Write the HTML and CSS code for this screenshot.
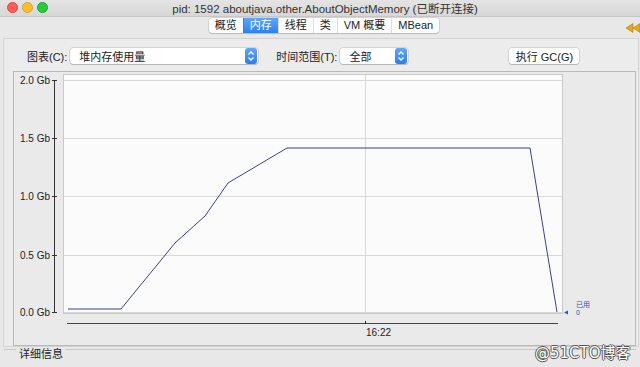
FILE: index.html
```html
<!DOCTYPE html>
<html lang="zh">
<head>
<meta charset="utf-8">
<title>JConsole 内存</title>
<link rel="stylesheet" href="styles.css">
</head>
<body>
<div class="titlebar">
  <div class="lights"><span class="light red"></span><span class="light yellow"></span><span class="light green"></span></div>
  <div class="title">pid: 1592 aboutjava.other.AboutObjectMemory (已断开连接)</div>
  <div></div>
</div>
<div class="tabbar">
  <div></div>
  <div class="tabs">
    <span class="tab">概览</span><span class="tab active">内存</span><span class="tab">线程</span><span class="tab">类</span><span class="tab">VM 概要</span><span class="tab">MBean</span>
  </div>
  <svg class="rewind" width="18" height="10" viewBox="0 0 18 10"><path d="M1 5 L8 0.5 V9.5 Z M8 5 L15 0.5 V9.5 Z" fill="#e2a81e" stroke="#b07d10" stroke-width="0.6"/><rect x="15.5" y="1" width="2" height="8" fill="#e2a81e"/></svg>
</div>
<div class="panel">
  <div class="controls">
    <span class="label">图表(C):</span>
    <div class="combo combo-wide"><span class="combo-text">堆内存使用量</span><span class="stepper"><svg width="8" height="12" viewBox="0 0 8 12"><path d="M1.5 4.5 L4 2 L6.5 4.5 M1.5 7.5 L4 10 L6.5 7.5" fill="none" stroke="#fff" stroke-width="1.3"/></svg></span></div>
    <span class="label label-range">时间范围(T):</span>
    <div class="combo combo-narrow"><span class="combo-text">全部</span><span class="stepper"><svg width="8" height="12" viewBox="0 0 8 12"><path d="M1.5 4.5 L4 2 L6.5 4.5 M1.5 7.5 L4 10 L6.5 7.5" fill="none" stroke="#fff" stroke-width="1.3"/></svg></span></div>
    <button class="gc">执行 GC(G)</button>
  </div>
  <div class="chart">
    <svg class="plot" width="621" height="273" viewBox="0 0 621 273">
      <rect x="49.5" y="2.5" width="499" height="239" fill="#fbfbfb" stroke="#c9c9c9"/>
      <g stroke="#d9d9d9" stroke-width="1">
        <line x1="50" y1="8.5" x2="548" y2="8.5"/>
        <line x1="50" y1="66.5" x2="548" y2="66.5"/>
        <line x1="50" y1="124.5" x2="548" y2="124.5"/>
        <line x1="50" y1="183.5" x2="548" y2="183.5"/>
        <line x1="50" y1="240.5" x2="548" y2="240.5"/>
        <line x1="351.5" y1="3" x2="351.5" y2="241"/>
      </g>
      <g stroke="#333" stroke-width="1">
        <line x1="40.5" y1="8" x2="40.5" y2="241"/>
        <line x1="38" y1="8.5" x2="43" y2="8.5"/>
        <line x1="38" y1="66.5" x2="43" y2="66.5"/>
        <line x1="38" y1="124.5" x2="43" y2="124.5"/>
        <line x1="38" y1="183.5" x2="43" y2="183.5"/>
        <line x1="38" y1="240.5" x2="43" y2="240.5"/>
      </g>
      <g class="axis-label" text-anchor="end">
        <text x="36" y="12">2.0 Gb</text>
        <text x="36" y="70">1.5 Gb</text>
        <text x="36" y="128">1.0 Gb</text>
        <text x="36" y="187">0.5 Gb</text>
        <text x="36" y="244">0.0 Gb</text>
      </g>
      <line x1="53" y1="251.5" x2="544" y2="251.5" stroke="#444"/>
      <line x1="351.5" y1="249" x2="351.5" y2="252" stroke="#222"/>
      <text class="axis-label" x="352" y="264">16:22</text>
      <polyline points="54,237 107,237 161,171 191,144 214,111 273,76 516,76 543,240" fill="none" stroke="#3d3d94" stroke-width="1"/>
      <polygon points="550,240.5 554,238.5 554,242.5" fill="#3355aa"/>
      <text class="legend" x="562" y="235">已用</text>
      <text class="legend" x="562" y="243">0</text>
    </svg>
  </div>
</div>
<div class="details"><span class="details-title">详细信息</span></div>
<div class="watermark">@51CTO博客</div>
</body>
</html>
```
FILE: styles.css
```css
* { box-sizing: border-box; margin: 0; padding: 0; }
html, body { width: 640px; height: 367px; overflow: hidden; }
body {
  position: relative;
  background: #e8e8e8;
  font-family: "Liberation Sans", "Noto Sans CJK SC", sans-serif;
  font-size: 11px;
  color: #222;
}
.titlebar {
  height: 17px;
  display: grid;
  grid-template-columns: 1fr auto 1fr;
  align-items: center;
  background: linear-gradient(#e4e4e4, #d7d7d7);
  border-bottom: 1px solid #c6c6c6;
}
.lights { display: flex; gap: 4px; padding-left: 7px; align-self: start; padding-top: 2px; }
.light { width: 11px; height: 11px; border-radius: 50%; }
.red { background: #fc5f57; border: 0.5px solid #e0443e; }
.yellow { background: #fdbc2e; border: 0.5px solid #dea123; }
.green { background: #2ac940; border: 0.5px solid #1aab29; }
.title { font-size: 11.5px; color: #333; padding-left: 10px; white-space: nowrap; }
.tabbar {
  height: 21px;
  display: grid;
  grid-template-columns: 1fr auto 1fr;
  align-items: start;
  padding: 1px 0 0 8px;
}
.tabs {
  display: flex;
  background: #fff;
  border-radius: 3px;
  box-shadow: 0 0 0 0.5px rgba(0,0,0,0.18), 0 1px 1px rgba(0,0,0,0.12);
}
.tab {
  height: 15px;
  line-height: 15px;
  padding: 0 6px;
  color: #222;
  border-left: 1px solid #dedede;
  white-space: nowrap;
}
.tab:first-child { border-left: none; }
.tab.active {
  color: #fff;
  background: linear-gradient(#5fa6fa, #2d80ee);
  border-left-color: #2d80ee;
}
.rewind { justify-self: end; margin-top: 5px; margin-right: -3px; }
.panel {
  width: 636px;
  height: 309px;
  margin-left: 3px;
  border: 1px solid #d3d3d3;
  background: #ececec;
  padding: 9px 2px 0 9px;
  display: flex;
  flex-direction: column;
  gap: 7px;
}
.controls { display: flex; align-items: center; height: 16px; }
.label { margin-left: 14px; white-space: nowrap; color: #222; }
.label-range { margin-left: 18px; }
.combo {
  height: 16px;
  margin-left: 3px;
  background: #fff;
  border-radius: 3px;
  box-shadow: 0 0 0 0.5px rgba(0,0,0,0.2), 0 1px 1px rgba(0,0,0,0.15);
  display: flex;
  align-items: center;
  justify-content: space-between;
  padding: 0 1px 0 9px;
}
.combo-wide { width: 188px; }
.combo-narrow { width: 68px; }
.stepper {
  width: 12px;
  height: 16px;
  border-radius: 3px;
  background: linear-gradient(#62a7f8, #2c7ee9);
  display: flex;
  align-items: center;
  justify-content: center;
}
.gc {
  margin-left: 101px;
  width: 70px;
  height: 16px;
  border: none;
  background: #fff;
  border-radius: 3px;
  box-shadow: 0 0 0 0.5px rgba(0,0,0,0.2), 0 1px 1px rgba(0,0,0,0.15);
  font-family: inherit;
  font-size: 11px;
  color: #222;
}
.chart {
  width: 623px;
  height: 275px;
  border: 1px solid #b9b9b9;
  background: #eaeaea;
}
.plot { display: block; }
.axis-label { font-family: "Liberation Sans", sans-serif; font-size: 10px; fill: #222; }
.legend { font-family: "Liberation Sans", "Noto Sans CJK SC", sans-serif; font-size: 7px; fill: #3355aa; }
.details {
  display: flex;
  align-items: flex-start;
  height: 20px;
  padding-left: 4px;
}
.details::before, .details::after {
  content: "";
  height: 1px;
  background: #c8c8c8;
  margin-top: 2px;
}
.details::before { width: 12px; }
.details::after { flex: 1; margin-right: 4px; }
.details-title { padding: 0 3px; line-height: 13px; margin-top: 1px; color: #222; }
.watermark {
  position: absolute;
  left: 535px;
  top: 341px;
  font-family: "DejaVu Sans", "Noto Sans CJK SC", sans-serif;
  font-size: 15px;
  color: #fff;
  text-shadow: 1px 0 0 #555, -1px 0 0 #555, 0 1px 0 #555, 0 -1px 0 #555;
  white-space: nowrap;
}
```
